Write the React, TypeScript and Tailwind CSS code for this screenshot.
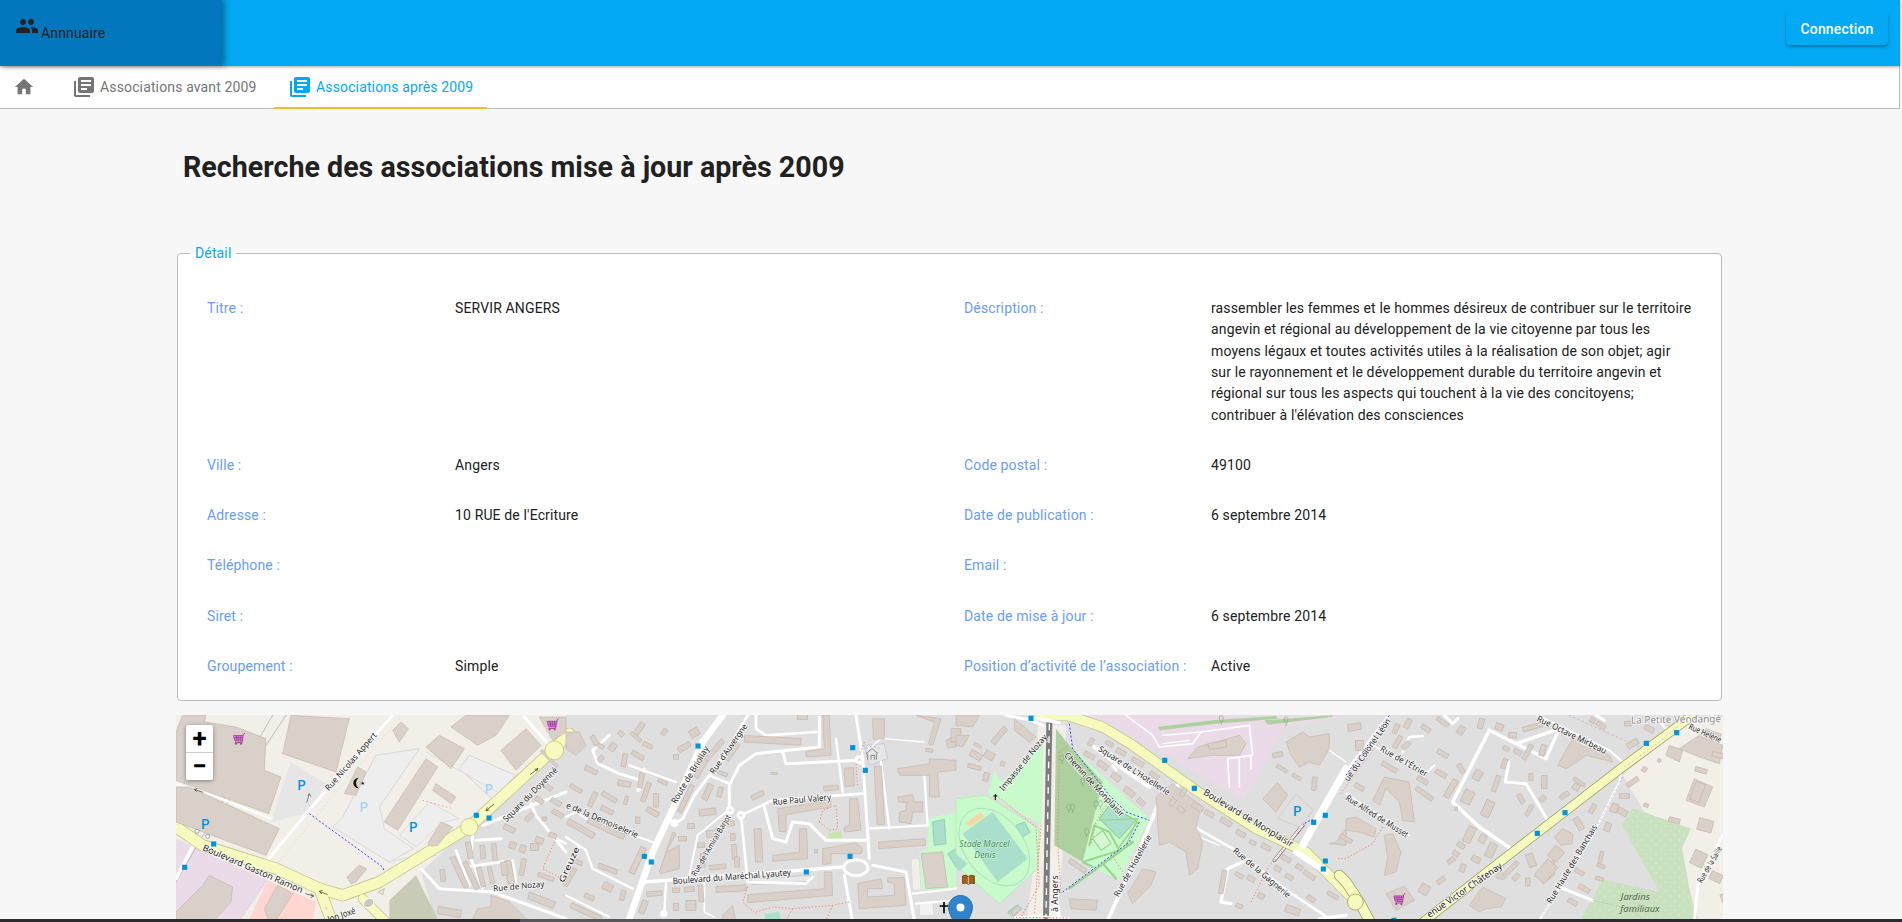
import React from "react";
import { MdPeople, MdHome, MdLibraryBooks } from "react-icons/md";

type Rect = [number, number, number, number, number?];
type Road = [string, number, string?, string?];
type Label = [string, number, number, number, number, number?, string?];
type Crop = {
  ox: number;
  areas: [string, string, string?][];
  polys: string[];
  rects: Rect[];
  roads: Road[];
  stops: [number, number][];
  labels: Label[];
};

const WHITE = "#ffffff";
const PRIMARY = "#f7fabf";
const PINK = "#fa8072";
const BLUE = "#3b3bff";
const LAWN = "#9bd48e";
const T = undefined;

const crops: Crop[] = [
  {
    ox: 0,
    areas: [
      ["#f2efe9", "0,0 1170,0 1170,630 0,630"],
      ["#e0dfdf", "735,480 1170,75 1170,630 780,630"],
      ["#ebdbe8", "0,380 275,505 190,630 0,630"],
      ["#ffd6d1", "275,505 420,570 410,630 215,630"],
      ["#c8cbb5", "640,565 720,490 790,630 640,630"],
      ["#e6e6e6", "345,150 450,215 400,300 290,330 300,280"],
      ["#eeeeee", "500,315 600,130 730,110 610,285 625,350 712,410 640,450 470,345", "#d8d8d8"],
      ["#eeeeee", "850,170 880,130 1020,190 950,262", "#d8d8d8"],
      ["#eeeeee", "670,370 760,270 850,320 800,330 720,405", "#dddddd"],
    ],
    polys: [
      "20,10 90,10 85,30 180,45 270,80 265,175 315,195 278,305 0,205 0,60",
      "345,10 520,20 480,180 320,125",
      "0,225 40,225 310,350 270,430 0,330",
      "505,245 545,165 570,180 540,250",
      "625,330 750,140 785,165 665,355",
      "750,105 790,70 865,110 825,170",
      "975,115 1050,50 1095,100 1020,175",
      "825,45 870,10 1000,10 960,70 905,100",
      "1090,15 1170,15 1170,60 1130,85",
      "650,55 675,30 697,50 670,90",
      "780,215 840,255 825,275 770,235",
      "755,395 795,330 830,345 785,400 765,402",
      "512,495 550,460 572,470 540,510 525,515",
      "0,600 80,520 100,490 170,525 165,570 110,630 0,630",
      "265,590 305,520 350,545 300,625 280,630",
      "885,630 905,590 945,585 945,550 1000,570 1060,630",
      "1060,540 1140,570 1130,590 1055,560",
    ],
    rects: [
      [820, 600, 22, 70, -80], [1000, 480, 20, 70, -10], [1120, 140, 70, 8, 45], [850, 480, 16, 100, -25], [885, 490, 14, 90, -25],
      [915, 495, 14, 60, -15], [945, 490, 12, 50, -12], [985, 470, 18, 40, -8], [880, 415, 16, 50, -10], [920, 420, 14, 40, -5],
      [955, 420, 14, 50, -5], [1040, 465, 14, 50, 10], [1090, 385, 24, 18, 20], [1130, 370, 24, 14, 20], [1075, 405, 24, 20, 0],
      [1040, 410, 18, 22, 20], [1010, 400, 20, 20, 20], [1000, 350, 36, 16, 25], [1060, 315, 30, 14, -45], [1090, 265, 28, 14, 35],
      [1145, 305, 36, 14, 30], [1115, 225, 30, 14, 35], [1140, 270, 34, 14, 30], [1105, 320, 14, 10, 0], [800, 490, 14, 36, -5], [1110, 495, 50, 12, 20],
    ],
    roads: [
      ["0,510 290,10", 1.5, "#8f8f8f"], ["90,370 330,10", 1.5, "#8f8f8f"],
      ["0,215 110,250 285,320", 6], ["270,450 420,270 650,10", 9], ["0,500 60,385", 11],
      ["300,460 460,265 670,20", 2, "#c6c6c0", "3 8"],
      ["190,630 280,490", 3, "#d0cdc6", "3 8"],
      ["890,370 885,440 920,530", 8], ["870,465 1010,445 1020,510", 8], ["900,385 975,380", 9], ["840,415 880,520", 8],
      ["735,470 790,530 950,540 1170,620", 9], ["920,340 1170,240", 9], ["1065,275 1080,310 1170,420", 9],
      ["1120,370 1170,395", 7], ["1045,15 1120,100", 9], ["1010,530 1000,450", 5],
      ["750,120 1000,260", 3, "#dddddd"], ["640,450 770,420", 3, "#dddddd"], ["640,470 780,430", 3, "#dddddd"],
      ["400,305 620,465 630,490", 3, BLUE, "6 6"], ["590,520 700,460", 3, BLUE, "6 6"],
      ["740,265 830,290", 2.5, PINK, "4 8"], ["1140,380 1100,470 1160,500", 3, PINK, "4 6"],
      ["430,530 470,635", 36, "#b9ba7b"], ["560,560 640,640", 30, "#b9ba7b"],
      ["0,345 80,400 300,470 430,530 500,550 610,510 880,345 1130,115 1180,65", 36, "#b9ba7b"],
      ["430,530 470,635", 32, PRIMARY], ["560,560 640,640", 26, PRIMARY],
      ["0,345 80,400 300,470 430,530 500,550 610,510 880,345 1130,115 1180,65", 32, PRIMARY],
    ],
    stops: [[113, 396], [26, 466], [901, 310], [939, 318]],
    labels: [
      ["Rue Nicolas Appert", 452, 232, 597, 65, 25],
      ["Boulevard Gaston Ramon", 82, 405, 380, 535, 27],
      ["Square du Doyenné", 985, 325, 1140, 170, 26],
      ["Rue de Nozay", 952, 530, 1105, 515, 25],
      ["Jon Joxé", 455, 622, 538, 595, 27],
    ],
  },
  {
    ox: 390,
    areas: [
      ["#e0dfdf", "0,0 1170,0 1170,630 0,630"],
      ["#c8facc", "1085,320 1170,300 1170,530 1065,535 1060,420 1085,410"],
      ["#e6e6e6", "895,100 955,95 965,140 910,160", "#c8c8d8"],
      ["#aae0cb", "1100,330 1135,322 1140,395 1105,400", "#8fd0b5"],
      ["#aae0cb", "1145,425 1170,410 1170,465", "#8fd0b5"],
      ["#c9e6a8", "785,365 825,358 828,378 790,382"],
      ["#aae0cb", "595,605 640,600 645,630 600,630"],
      ["#e8e8e8", "555,500 735,490 735,508 560,518", "#cccccc"],
      ["#f2f2f2", "1060,575 1100,570 1105,610 1060,612", "#d8d8d8"],
      ["#f2efe9", "1035,440 1060,440 1065,535 1040,535", "#dddddd"],
    ],
    polys: [
      "770,10 790,10 795,130 720,135 720,118 775,110",
      "1050,10 1125,20 1100,100 1088,95 1105,30",
      "995,170 1090,155 1090,140 1170,145 1170,175 1115,180 1120,255 1090,255 1090,190 1000,190",
      "995,255 1040,248 1045,270 1070,270 1070,300 1040,300 1035,335 1000,330 1000,300 1020,295 1020,270 998,270",
      "850,260 875,260 885,355 835,360 835,345 850,340",
      "635,290 795,265 795,285 660,308 660,360 640,358",
      "700,350 722,350 725,440 620,448 620,430 700,420",
      "770,410 870,392 890,410 885,425 795,425 795,455 770,458",
      "545,548 775,530 775,480 797,480 800,550 545,572",
      "875,515 945,500 950,530 905,530 905,555 985,550 985,515 965,510 965,497 1015,497 1020,580 880,590",
      "1065,425 1130,420 1145,525 1080,530",
      "920,20 955,20 955,80 922,82",
      "0,60 40,60 60,100 30,130 0,110",
      "280,480 320,360 330,365 300,420 340,400 340,470 285,485",
      "470,610 500,580 510,630 470,630",
      "1140,85 1170,70 1170,105 1145,108",
    ],
    rects: [
      [620, 85, 170, 20, 3], [940, 250, 22, 175, -3], [850, 195, 28, 55, -3], [577, 400, 22, 100, -3], [1008, 395, 140, 20, -4], [495, 530, 90, 18, -3],
      [710, 15, 30, 14, 0], [625, 185, 20, 6, 0], [575, 250, 40, 14, -25], [795, 228, 44, 14, -5], [1090, 115, 20, 10, 10],
      [215, 445, 18, 85, 25], [120, 350, 120, 16, 25], [125, 470, 60, 14, 20], [45, 350, 90, 18, 30], [75, 175, 40, 14, 25],
      [105, 140, 20, 14, -50], [140, 105, 20, 24, 35], [175, 145, 14, 40, 10], [100, 100, 30, 12, 30], [220, 50, 16, 40, 35],
      [165, 65, 18, 14, 40], [85, 85, 30, 14, 60], [210, 75, 40, 10, 40], [245, 100, 30, 12, 25], [215, 130, 40, 14, 30],
      [175, 215, 40, 16, 10], [225, 205, 14, 45, 10], [240, 240, 14, 60, 20], [290, 210, 30, 10, 25], [270, 265, 14, 40, 0],
      [260, 300, 40, 16, 30], [130, 255, 50, 14, 30], [180, 265, 10, 26, 15], [80, 262, 14, 46, 25], [30, 230, 40, 12, 30],
      [123, 295, 40, 14, 25], [215, 325, 14, 20, 0], [295, 60, 14, 20, 30], [355, 105, 40, 16, -30], [385, 62, 28, 24, -30],
      [330, 135, 14, 14, 0], [445, 115, 80, 14, -50], [405, 170, 60, 14, -60], [500, 120, 60, 12, -55], [360, 260, 90, 14, -65],
      [470, 185, 30, 10, 20], [425, 240, 18, 50, 25], [462, 240, 14, 30, 15], [425, 300, 50, 20, -5], [490, 335, 30, 14, -10],
      [375, 342, 20, 16, 0], [440, 365, 36, 20, -5], [500, 375, 14, 20, 0], [350, 380, 24, 14, 0], [405, 400, 20, 14, 0],
      [505, 420, 14, 45, -5], [410, 445, 14, 40, 0], [455, 465, 50, 14, -5], [513, 450, 14, 30, 0], [330, 535, 20, 14, 0],
      [370, 532, 30, 14, -5], [405, 545, 14, 50, -5], [265, 545, 46, 14, -5], [330, 585, 14, 22, 0], [375, 580, 30, 30, 0],
      [232, 585, 18, 40, 20], [125, 525, 30, 22, 25], [170, 550, 14, 30, 15], [70, 555, 30, 14, 25], [35, 450, 30, 12, 25],
      [60, 600, 100, 16, 25], [12, 495, 14, 60, 30], [750, 418, 10, 10, 0], [1170, 70, 30, 40, 0],
    ],
    roads: [
      ["470,10 410,90 330,270 260,420 190,620", 20], ["545,10 500,90 430,190 385,250 350,320 325,335", 9],
      ["130,70 80,115 95,155 160,185 225,205 215,235", 9], ["190,160 330,210", 7], ["235,170 220,235", 7],
      ["430,190 490,215", 7], ["760,105 570,125 520,160 490,220 490,290", 9], ["525,310 620,265 890,245", 8],
      ["525,310 545,510 720,515 740,495", 8], ["235,510 830,465", 10], ["870,10 890,140 910,440", 9],
      ["650,120 660,155 880,145", 9], ["760,15 760,105", 9], ["570,10 570,50 600,70 750,60", 8],
      ["810,80 830,240", 7], ["595,285 620,380 660,390 680,330 730,335 780,385 900,385", 9],
      ["945,150 970,350", 7], ["1075,190 1085,340 905,350", 7], ["955,80 1075,90", 4], ["950,75 910,110", 4],
      ["835,490 860,630", 9], ["920,460 1020,480 1045,625", 9], ["1040,545 1170,530", 7],
      ["300,510 295,600", 7], ["415,510 415,600 445,615", 5], ["0,375 60,415 80,470 200,530", 7],
      ["0,315 30,300 60,320 260,390", 6], ["0,550 130,615", 6], ["370,490 395,370 480,300", 6], ["1050,575 1170,565", 7],
      ["495,290 440,370", 4, "#e8e8e8"],
      ["545,525 530,570 575,610", 3, PINK, "4 6"], ["570,600 620,585 680,590 800,580 850,570", 3, PINK, "4 6"],
      ["680,590 660,625", 3, PINK, "4 6"], ["800,580 780,625", 3, PINK, "4 6"],
      ["760,330 770,295 810,280 815,350 790,355 760,330", 3, PINK, "4 6"], ["895,90 870,160 875,220", 3, PINK, "4 6"],
    ],
    stops: [[396, 102], [235, 433], [256, 450], [860, 107], [898, 175], [852, 433], [721, 480]],
    labels: [
      ["Route de Briollay", 322, 272, 422, 105, 26],
      ["Rue d'Auvergne", 437, 183, 538, 38, 25],
      ["e de la Demoiselerie", 2, 278, 216, 370, 26],
      ["Rue Paul Valery", 620, 270, 795, 255, 27],
      ["Rue de l'Amiral Barjot", 382, 490, 488, 310, 24],
      ["Boulevard du Maréchal Lyautey", 320, 507, 675, 481, 27],
      ["Greuze", -15, 510, 33, 405, 25],
    ],
  },
  {
    ox: 780,
    areas: [
      ["#e0dfdf", "0,0 1170,0 1170,630 0,630"],
      ["#ebdbe8", "390,10 1170,10 1170,14 985,45 862,265 600,110"],
      ["#f2efe9", "245,40 330,40 320,430 300,630 210,630 250,350"],
      ["#c8facc", "95,245 115,175 135,210 262,90 258,340"],
      ["#c8facc", "0,260 90,250 250,350 245,470 130,575 0,460", "#b8ecbc"],
      ["#c8facc", "340,100 580,320 490,505 375,450"],
      ["#add19e", "300,50 340,100 440,210 420,290 380,450 295,400"],
      ["#aae0cb", "20,365 110,300 215,440 125,510"],
      ["#f5d7a3", "28,335 75,300 85,315 40,345"],
      ["#aae0cb", "180,340 205,330 222,360 200,375", "#8fd0b5"],
      ["#aae0cb", "0,425 35,455 10,478 0,470"],
      ["#aae0cb", "155,600 185,578 198,590 170,615", "#8fd0b5"],
      ["#aae0cb", "430,320 460,280 540,325 490,380", "#88c97b"],
      ["#d8f5d2", "410,380 440,355 465,395 435,415", "#88c97b"],
      ["#add19e", "605,45 770,25 960,12 965,20 780,35 612,55"],
      ["#add19e", "925,25 1130,10 1130,14 935,38"],
    ],
    polys: [
      "600,255 650,215 700,255 735,280 720,345 740,390 725,470 700,490 690,420 640,390 610,400",
      "515,545 560,470 600,480 585,520 530,575",
      "340,560 425,565 420,595 345,590",
      "725,105 850,70 870,95 850,130 770,130 695,140",
      "755,95 810,85 812,105 760,112",
      "990,90 1040,60 1060,75 1120,65 1120,110 1090,160 1060,150 1030,165 1005,130",
      "920,260 965,212 995,250 960,300",
      "1170,350 1140,390 1120,395 1170,400",
      "0,70 40,70 20,105 0,100",
      "0,10 70,10 50,45 0,40",
      "175,20 240,75 220,90 175,55",
    ],
    rects: [
      [130, 70, 16, 60, 40], [65, 100, 24, 8, 30], [60, 130, 36, 20, 30], [100, 130, 30, 22, 30], [55, 165, 40, 12, 15], [90, 195, 16, 26, 15],
      [140, 155, 12, 14, 20], [365, 462, 60, 14, 35], [180, 595, 30, 14, -40], [405, 90, 12, 24, 30], [460, 95, 24, 12, 30], [495, 120, 30, 14, 30],
      [545, 150, 40, 14, 30], [595, 190, 30, 14, 35], [400, 130, 34, 14, 30], [440, 160, 34, 18, 35], [480, 195, 30, 18, 35], [520, 240, 36, 18, 40],
      [555, 270, 26, 16, 40], [650, 270, 14, 24, 35], [682, 240, 14, 26, 30], [675, 292, 24, 12, 35], [725, 285, 36, 16, 30], [760, 305, 30, 14, 30],
      [810, 330, 36, 16, 30], [855, 365, 30, 14, 30], [890, 392, 20, 12, 30], [930, 405, 30, 14, 30], [990, 440, 30, 14, 30], [1030, 465, 20, 14, 30],
      [1060, 490, 40, 14, 35], [965, 470, 20, 16, 30], [1000, 495, 24, 14, 30], [850, 490, 26, 12, 30], [885, 500, 24, 14, 30], [915, 552, 20, 16, 30],
      [850, 582, 20, 12, 20], [800, 510, 14, 70, 10], [1075, 215, 14, 40, 5], [965, 128, 30, 14, -10], [978, 170, 36, 10, 30], [1022, 195, 30, 10, 30],
      [1130, 550, 36, 12, 30], [1065, 560, 26, 14, 35], [1010, 595, 44, 22, 20], [1170, 380, 40, 12, 30],
    ],
    roads: [
      ["280,35 270,612", 18, "#7d7d7d"], ["280,35 270,612", 4, "#ffffff", "20 18"], ["255,340 235,610", 3, PINK, "4 6"],
      ["150,10 225,25 262,40", 9], ["415,105 500,170 580,225", 12], ["470,160 480,175", 8],
      ["680,205 605,280 530,460 455,625", 11], ["610,285 830,410 1000,540 1120,620", 8],
      ["590,300 630,300", 5, "#eeeeee"], ["640,340 720,370 790,400", 4], ["860,450 815,470 795,570 825,575", 10],
      ["1120,115 1170,150", 4], ["1170,610 1090,620", 10],
      ["510,10 590,70 610,105 710,95 735,60 880,40 890,130 815,140 820,225", 5], ["885,135 885,170", 5], ["850,140 850,225", 5],
      ["620,70 735,60", 4], ["620,95 700,85", 4], ["300,560 310,620", 12],
      ["340,530 530,390", 7, LAWN], ["445,460 480,500", 7, LAWN], ["400,400 415,340 460,360 490,415 380,450 410,465", 6, LAWN], ["430,325 545,320 510,400", 4, LAWN],
      ["545,330 490,405", 4, LAWN],
      ["340,35 350,110 460,250 510,300 580,325", 3, BLUE, "6 6"], ["550,330 520,390 320,540", 3, BLUE, "6 6"],
      ["1165,170 1080,320 1050,330 1040,350", 3, BLUE, "6 6"],
      ["120,250 240,345 250,520 195,615", 3, PINK, "4 6"], ["310,120 305,390 315,550", 3, PINK, "4 6"], ["310,120 340,95", 3, PINK, "4 6"],
      ["450,280 420,330 405,400", 3, PINK, "4 6"], ["465,425 500,480", 3, PINK, "4 6"], ["885,570 940,460 1040,350", 3, PINK, "4 6"],
      ["1040,340 955,445", 10, "#555555"], ["1040,340 955,445", 7, "#ffffff"], ["1040,340 955,445", 3, PINK, "4 6"],
      ["170,616 250,612 340,618", 5, "#ffffff"], ["170,616 340,618", 3, PINK, "4 6"],
      ["250,8 340,12 440,45 530,100 720,235 900,350 1050,420 1180,550", 32, "#b9ba7b"],
      ["250,8 340,12 440,45 530,100 720,235 900,350 1050,420 1180,550", 28, PRIMARY],
      ["230,18 310,32", 10, "#ffffff"],
      ["1170,170 1040,400", 22], ["1020,420 1110,480", 18],
    ],
    stops: [[225, 19], [626, 145], [715, 229], [1073, 331], [1108, 310], [1108, 447], [1102, 471]],
    labels: [
      ["Impasse de Nozay", 135, 233, 268, 70, 25],
      ["Chemin de Monplaisir", 330, 125, 500, 310, 26],
      ["Square de L'Hotellerie", 430, 108, 640, 243, 25],
      ["Boulevard de Monplaisir", 745, 238, 1010, 398, 28],
      ["Rue de l'Hotellerie", 480, 552, 580, 370, 25],
      ["Rue de la Gagnerie", 835, 412, 1000, 552, 26],
      ["à Angers", 298, 600, 298, 490, 26],
    ],
  },
  {
    ox: 1170,
    areas: [
      ["#e0dfdf", "0,0 1170,0 1170,630 0,630"],
      ["#f2efe9", "830,190 1020,30 1170,10 1170,630 1060,630 1030,530"],
      ["#c9e1bf", "828,340 860,288 1035,350 1008,408 1048,630 700,630 770,503 940,540"],
      ["url(#allot)", "828,340 860,288 1035,350 1008,408 1048,630 700,630 770,503 940,540"],
    ],
    polys: [
      "635,160 680,80 790,130 800,150 760,140 720,130 700,145 660,170",
      "120,545 175,522 205,565 150,595",
      "370,580 410,525 480,560 465,585 420,590 400,600",
      "1020,265 1045,200 1100,225 1075,285",
      "960,130 970,100 1010,115 1000,150",
      "1000,110 1060,70 1130,100 1120,155 1060,135",
      "80,265 115,195 190,210 205,330 170,325 160,270 120,230 100,280",
      "580,480 625,440 625,490 590,515",
      "0,320 30,315 90,350 85,375 40,360 0,355",
      "115,370 140,365 165,420 150,480 115,490 125,440",
      "650,350 680,365 680,395 645,400 625,375",
    ],
    rects: [
      [425, 290, 26, 50, 25], [365, 255, 30, 40, 25], [315, 230, 18, 60, 30], [235, 245, 60, 14, 35], [290, 125, 36, 14, 30],
      [230, 205, 36, 14, 30], [285, 185, 14, 36, -60], [345, 170, 14, 30, -30], [395, 190, 24, 30, 30], [155, 90, 14, 40, 30],
      [130, 165, 50, 14, 30], [185, 35, 16, 30, 30], [240, 50, 30, 14, 35], [290, 30, 40, 12, 35], [345, 55, 20, 26, 35],
      [405, 35, 16, 30, 15], [460, 45, 24, 20, 20], [560, 45, 60, 14, -15], [500, 70, 24, 16, 0], [590, 115, 16, 34, 15],
      [545, 120, 14, 50, 30], [515, 120, 24, 14, 30], [480, 110, 20, 12, 30], [475, 155, 14, 30, 20], [450, 215, 14, 50, 20],
      [555, 195, 12, 20, 0], [595, 210, 16, 40, 0], [590, 260, 20, 14, -45], [525, 260, 14, 30, -30], [550, 295, 12, 36, 30],
      [655, 250, 30, 14, -35], [700, 210, 40, 10, 35], [690, 225, 20, 20, 30], [740, 290, 14, 30, 30], [785, 345, 18, 26, 20],
      [698, 335, 18, 40, -30], [805, 288, 20, 26, 20], [830, 300, 30, 18, 30], [370, 368, 24, 50, 25], [345, 400, 24, 14, 30],
      [410, 380, 20, 26, 30], [435, 415, 24, 44, 25], [390, 442, 26, 18, 25], [330, 425, 20, 14, 35], [350, 468, 16, 24, 20],
      [315, 445, 24, 14, -35], [285, 505, 26, 14, -35], [235, 532, 28, 30, 30], [600, 478, 40, 64, 40], [630, 425, 34, 40, 40],
      [555, 445, 22, 40, -20], [490, 475, 14, 70, 45], [510, 495, 14, 24, 45], [460, 490, 14, 20, 45], [545, 510, 14, 24, 0],
      [765, 435, 10, 36, 15], [765, 462, 24, 10, 20], [700, 480, 30, 12, 30], [715, 530, 36, 14, 30], [680, 570, 30, 14, 30],
      [760, 500, 24, 10, 15], [860, 210, 40, 14, -35], [895, 172, 14, 14, 30], [940, 145, 10, 10, 30], [835, 252, 30, 14, 0],
      [900, 280, 14, 10, 20], [1065, 175, 36, 14, 15], [1055, 240, 30, 56, 20], [1078, 340, 44, 36, 15], [985, 325, 34, 14, 15],
      [1058, 440, 40, 44, 25], [1110, 495, 36, 26, 25], [1100, 65, 50, 14, 20], [1120, 130, 44, 14, 15], [860, 95, 36, 18, -30],
      [910, 50, 30, 16, 30], [40, 100, 24, 30, 0], [25, 45, 40, 20, -10], [40, 225, 30, 14, 30], [180, 100, 30, 14, -40],
      [150, 50, 14, 30, 25], [845, 35, 20, 14, 0], [765, 40, 30, 14, 35], [740, 25, 16, 16, 30], [330, 290, 10, 10, 0],
      [1140, 555, 30, 24, -20],
    ],
    roads: [
      ["130,10 0,180", 10], ["0,180 -20,220", 10],
      ["430,55 320,270 400,345 495,410", 11], ["430,55 600,140 640,50 510,95", 10], ["488,150 478,210 540,215 605,325", 9],
      ["170,120 190,75 230,72", 8], ["80,100 240,185 265,160", 6], ["0,245 190,370", 6],
      ["575,10 790,115 830,150 820,210 740,370 580,625", 6], ["640,525 740,565", 9], ["1130,370 1055,520 1045,630", 9],
      ["295,10 320,35 335,20", 9], ["750,10 775,25", 9], ["930,20 960,50", 8], ["1060,0 1130,20", 3],
      ["830,195 760,330 590,610", 2, "#b892c8", "5 4 1 4"], ["670,10 890,110 950,60", 2, "#b892c8", "5 4 1 4"],
      ["740,565 850,590 900,630", 3, "#c5b3a0", "3 6"],
      ["130,10 0,190", 3, BLUE, "6 6"], ["100,90 -20,250", 2.5, PINK, "4 6"],
      ["110,345 80,395 0,440", 3, PINK, "4 6"], ["0,440 -30,440", 3, PINK, "4 6"],
      ["225,635 500,420 830,165 1040,10", 29, "#8f9049"],
      ["225,635 500,420 830,165 1040,10", 25, PRIMARY],
      ["835,165 940,90 1010,30", 2, "#b892c8", "5 4 1 4"],
      ["-20,490 0,510 40,570 75,635", 33, "#8f9049"],
      ["-20,490 0,510 40,570 75,635", 29, PRIMARY],
    ],
    stops: [[574, 364], [657, 302], [901, 94], [992, 62], [144, 625]],
    labels: [
      ["ue du Colonel Léon", 0, 205, 128, 22, 25],
      ["Rue de l'Étrier", 105, 108, 243, 187, 25],
      ["Rue Alfred de Musset", 2, 255, 185, 370, 26],
      ["Rue Octave Mirbeau", 575, 18, 780, 118, 26],
      ["Rue Hélène", 1030, 42, 1125, 85, 26],
      ["enue Victor Châtenay", 245, 610, 465, 458, 28],
      ["Rue Haute des Banchais", 608, 572, 747, 340, 26],
      ["Rue de la Saille", 1060, 510, 1122, 405, 25],
      ["La Petite Vendangé", 855, 24, 1125, 20, 30, "#8a8a8a"],
    ],
  },
];

function Lbl({ l }: { l: Label }) {
  const [t, x1, y1, x2, y2, size = 26, fill = "#222222"] = l;
  const len = Math.hypot(x2 - x1, y2 - y1);
  const a = (Math.atan2(y2 - y1, x2 - x1) * 180) / Math.PI;
  return (
    <text
      x={x1}
      y={y1}
      dy=".35em"
      fontSize={size}
      fill={fill}
      fontFamily="'Noto Sans', sans-serif"
      stroke="#ffffff"
      strokeOpacity={0.85}
      strokeWidth={5}
      paintOrder="stroke"
      textLength={len}
      lengthAdjust="spacingAndGlyphs"
      transform={`rotate(${a} ${x1} ${y1})`}
    >
      {t}
    </text>
  );
}

function CropG({ ox, children }: { ox: number; children: React.ReactNode }) {
  return <g transform={`translate(${ox} -3) scale(${1 / 3})`}>{children}</g>;
}

function Cart({ x, y }: { x: number; y: number }) {
  return (
    <g transform={`translate(${x} ${y})`} fill="none" stroke="#ac39ac" strokeWidth={3}>
      <path d="M36 0 L31 4 L28 24 L6 24 L2 8 L30 8 M4 13 L29 13 M5 18 L28 18 M10 8 L12 24 M17 8 L17 24 M24 8 L23 24" />
      <path d="M28 24 L27 29 L6 29" />
      <circle cx={9} cy={32} r={2} fill="#ac39ac" />
      <circle cx={24} cy={32} r={2} fill="#ac39ac" />
    </g>
  );
}

function Tree({ x, y }: { x: number; y: number }) {
  return (
    <g transform={`translate(${x} ${y})`} fill="none" stroke="#8aa883" strokeWidth={2}>
      <ellipse cx={0} cy={0} rx={6} ry={9} />
      <path d="M0 9 V18" />
    </g>
  );
}

function MapDrawing() {
  const P = (x: number, y: number, c: string, s = 44) => (
    <text x={x} y={y} fontSize={s} fontWeight={500} fill={c} fontFamily="'Noto Sans', sans-serif">P</text>
  );
  return (
    <svg width={1547} height={204} viewBox="0 0 1547 204" className="block">
      <defs>
        <pattern id="allot" width="28" height="28" patternUnits="userSpaceOnUse">
          <circle cx="6" cy="6" r="1.6" fill="#eef6e8" />
          <circle cx="20" cy="20" r="1.6" fill="#eef6e8" />
        </pattern>
      </defs>
      {crops.map((c) => (
        <CropG key={c.ox} ox={c.ox}>
          {c.areas.map((a, i) => (
            <polygon key={i} points={a[1]} fill={a[0]} stroke={a[2]} strokeWidth={a[2] ? 3 : 0} />
          ))}
        </CropG>
      ))}
      {crops.map((c) => (
        <CropG key={c.ox} ox={c.ox}>
          {c.roads.map((r, i) => (
            <polyline
              key={i}
              points={r[0]}
              fill="none"
              stroke={r[2] ?? WHITE}
              strokeWidth={r[1]}
              strokeDasharray={r[3] ?? T}
              strokeLinecap={r[3] ? "butt" : "round"}
              strokeLinejoin="round"
            />
          ))}
        </CropG>
      ))}
      {crops.map((c) => (
        <CropG key={c.ox} ox={c.ox}>
          <g fill="#d9d0c9" stroke="#c4b6ab" strokeWidth={2}>
            {c.polys.map((p, i) => (
              <polygon key={i} points={p} />
            ))}
            {c.rects.map(([cx, cy, w, h, a = 0], i) => (
              <rect key={i} x={cx - w / 2} y={cy - h / 2} width={w} height={h} transform={`rotate(${a} ${cx} ${cy})`} />
            ))}
          </g>
        </CropG>
      ))}
      <CropG ox={0}>
        <circle cx={880} cy={345} r={26} fill={PRIMARY} stroke="#b9ba7b" strokeWidth={2} />
        <circle cx={1135} cy={115} r={28} fill={PRIMARY} stroke="#b9ba7b" strokeWidth={2} />
        <ellipse cx={578} cy={573} rx={17} ry={13} fill="#c8cbb5" stroke="#ffffff" strokeWidth={3} transform="rotate(-35 578 573)" />
        <polygon points="607,540 625,530 620,548" fill="#f2efe9" stroke="#a8a970" strokeWidth={2} />
        <polygon points="445,580 460,590 448,595" fill="#ffd6d1" />
        <circle cx={63} cy={358} r={6} fill="#ffffff" stroke="#777777" strokeWidth={2} />
        <circle cx={95} cy={373} r={6} fill="#ffffff" stroke="#777777" strokeWidth={2} />
        <Cart x={171} y={63} />
        <Cart x={1112} y={20} />
        {P(363, 235, "#0092da")}
        {P(74, 350, "#0092da")}
        {P(698, 360, "#0092da")}
        {P(550, 300, "#a5d4ef")}
        {P(925, 245, "#a5d4ef")}
        <path d="M548 197 A16 16 0 1 0 548 229 A20 20 0 0 1 548 197 Z" fill="#111111" />
        <text x={553} y={219} fontSize={16} fill="#111111" fontFamily="'DejaVu Sans', sans-serif">★</text>
        <path d="M400 245 L392 272 M400 245 L395 252 M400 245 L405 254" stroke="#555555" strokeWidth={2} fill="none" />
        <path d="M55 232 L82 241 M55 232 L64 230 M55 232 L62 239" stroke="#333333" strokeWidth={2} fill="none" />
        <path d="M388 545 L413 552 M413 552 L404 545 M413 552 L404 557" stroke="#333300" strokeWidth={2} fill="none" />
        <path d="M430 538 L455 548 M430 538 L438 546 M430 538 L440 535" stroke="#333300" strokeWidth={2} fill="none" />
        <path d="M1062 188 L1086 170 M1086 170 L1076 172 M1086 170 L1082 178" stroke="#333300" strokeWidth={2} fill="none" />
        <path d="M930 296 L954 276 M930 296 L940 294 M930 296 L934 286" stroke="#333300" strokeWidth={2} fill="none" />
      </CropG>
      <CropG ox={390}>
        <circle cx={492} cy={295} r={13} fill="#ffffff" /><circle cx={492} cy={295} r={4} fill="#e0dfdf" />
        <circle cx={525} cy={310} r={13} fill="#ffffff" /><circle cx={525} cy={310} r={4} fill="#e0dfdf" />
        <circle cx={880} cy={143} r={14} fill="#ffffff" /><circle cx={880} cy={143} r={5} fill="#e0dfdf" />
        <circle cx={325} cy={333} r={12} fill="#ffffff" />
        <circle cx={293} cy={605} r={11} fill="#ffffff" />
        <ellipse cx={870} cy={467} rx={36} ry={24} fill="#e0dfdf" stroke="#ffffff" strokeWidth={9} />
        <g stroke="#555555" strokeWidth={2} fill="none">
          <path d="M900 125 L918 110 L936 125 M905 125 V143 M931 125 V143 M915 143 V130 H925 V143" />
          <path d="M900 108 h5 M912 104 h5 M924 104 h5 M935 108 h5" strokeDasharray="2 2" />
        </g>
        <g stroke="#000000" strokeWidth={5}><path d="M1134 570 V604 M1121 582 H1147" /></g>
      </CropG>
      <CropG ox={780}>
        <ellipse cx={115} cy={405} rx={88} ry={130} fill="none" stroke="#a8e3c0" strokeWidth={3} transform="rotate(-38 115 405)" />
        <text x={10} y={405} fontSize={26} fontStyle="italic" fill="#3a8f4b" fontFamily="'Noto Sans', sans-serif" stroke="#ffffff" strokeOpacity={0.5} strokeWidth={3} paintOrder="stroke">Stade Marcel</text>
        <text x={55} y={438} fontSize={26} fontStyle="italic" fill="#3a8f4b" fontFamily="'Noto Sans', sans-serif" stroke="#ffffff" strokeOpacity={0.5} strokeWidth={3} paintOrder="stroke">Denis</text>
        <path d="M118 246 V264 M112 252 H124" stroke="#000000" strokeWidth={3} />
        <Tree x={338} y={285} /><Tree x={350} y={285} /><Tree x={420} y={275} /><Tree x={433} y={275} />
        <Tree x={318} y={138} /><Tree x={380} y={205} /><Tree x={392} y={358} /><Tree x={796} y={20} /><Tree x={990} y={24} />
        <g fill="none" stroke="#734a08" strokeWidth={3}>
          <path d="M20 492 Q30 486 37 494 Q45 486 55 492 V515 Q45 510 37 517 Q30 510 20 515 Z" fill="#a0601c" />
        </g>
        <path d="M37 494 V517" stroke="#ffffff" strokeWidth={2} />
        <text x={1010} y={312} fontSize={44} fontWeight={500} fill="#0092da" fontFamily="'Noto Sans', sans-serif">P</text>
        <polygon points="965,320 1020,245 1072,295 1030,345" fill="none" stroke="#d3cdc5" strokeWidth={3} />
      </CropG>
      <CropG ox={1170}>
        <circle cx={28} cy={570} r={24} fill={PRIMARY} stroke="#8f9049" strokeWidth={2} />
        <Cart x={142} y={544} />
        <text x={868} y={563} textAnchor="middle" fontSize={28} fontStyle="italic" fill="#4f6b4a" fontFamily="'Noto Sans', sans-serif">Jardins</text>
        <text x={882} y={600} textAnchor="middle" fontSize={28} fontStyle="italic" fill="#4f6b4a" fontFamily="'Noto Sans', sans-serif">familiaux</text>
      </CropG>
      {crops.map((c) => (
        <CropG key={c.ox} ox={c.ox}>
          {c.stops.map(([x, y], i) => (
            <rect key={i} x={x - 8} y={y - 8} width={16} height={16} fill="#0092da" stroke="#ffffff" strokeOpacity={0.5} strokeWidth={1} />
          ))}
          {c.labels.map((l, i) => (
            <Lbl key={i} l={l} />
          ))}
        </CropG>
      ))}
    </svg>
  );
}

function Field({ label, children }: { label: string; children?: React.ReactNode }) {
  return (
    <>
      <div className="py-[14.4px] text-[#6b9df0]">{label}</div>
      <div className="py-[14.4px] pr-[4px] text-[#212121]">{children}</div>
    </>
  );
}

export default function App() {
  return (
    <div
      className="flex h-[922px] w-full flex-col overflow-hidden bg-[#f7f7f7] text-[14px] leading-[21.4px] tracking-[0.14px]"
      style={{ fontFamily: "Roboto, sans-serif" }}
    >
      <div className="flex-1 overflow-hidden">
        <div className="mr-[2px]">
          <header className="relative z-10 flex h-[66px] items-start justify-between bg-[#03a9f4] pr-[12px] shadow-[0_1px_3px_rgba(0,0,0,0.35)]">
            <div className="flex h-[66px] w-[222px] bg-[#0277bd] pl-[15px] text-[#212121] shadow-[3px_0_6px_rgba(0,0,0,0.35)]">
              <MdPeople size={24} className="mt-[14px]" />
              <span className="mt-[23px] ml-[2px]">Annnuaire</span>
            </div>
            <button className="mt-[12px] h-[33px] w-[102px] rounded-[4px] bg-[#03a9f4] pt-[2px] font-medium text-white shadow-[0_2px_3px_rgba(0,0,0,0.3)]">
              Connection
            </button>
          </header>
          <nav className="flex h-[43px] items-stretch border-r border-b border-[#bbbbbb] bg-white text-[#757575]">
            <div className="flex w-[58px] items-start pt-[10px] pl-[13px]">
              <MdHome size={22} />
            </div>
            <div className="flex w-[216px] gap-[4px] pt-[9px] pl-[14px]">
              <MdLibraryBooks size={24} />
              <span className="pt-[2px]">Associations avant 2009</span>
            </div>
            <div className="mb-[-1px] flex w-[213px] gap-[4px] border-b-2 border-[#f0bc2e] pt-[9px] pl-[14px] text-[#03a9f4]">
              <MdLibraryBooks size={24} />
              <span className="pt-[2px]">Associations après 2009</span>
            </div>
          </nav>
        </div>
        <main className="mr-[179px] ml-[176px]">
          <h1 className="mt-[39px] ml-[7px] text-[28.65px] leading-[38px] font-bold tracking-normal text-[#212121]">
            Recherche des associations mise à jour après 2009
          </h1>
          <fieldset className="mt-[57px] mr-[1px] ml-[1px] h-[458px] rounded-[4px] border border-[#bbbbbb] bg-white pt-[19px] pl-[29px]">
            <legend className="ml-[-17px] px-[5px] text-[#03a9f4]">Détail</legend>
            <div className="grid grid-cols-[248px_509px_247px_486px]">
              <Field label="Titre :">SERVIR ANGERS</Field>
              <Field label="Déscription :">
                rassembler les femmes et le hommes désireux de contribuer sur le territoire angevin et régional au développement de la vie citoyenne par tous les moyens légaux et toutes activités utiles à la réalisation de son objet; agir sur le rayonnement et le développement durable du territoire angevin et régional sur tous les aspects qui touchent à la vie des concitoyens; contribuer à l'élévation des consciences
              </Field>
              <Field label="Ville :">Angers</Field>
              <Field label="Code postal :">49100</Field>
              <Field label="Adresse :">10 RUE de l'Ecriture</Field>
              <Field label="Date de publication :">6 septembre 2014</Field>
              <Field label="Téléphone :" />
              <Field label="Email :" />
              <Field label="Siret :" />
              <Field label="Date de mise à jour :">6 septembre 2014</Field>
              <Field label="Groupement :">Simple</Field>
              <Field label="Position d’activité de l’association :">Active</Field>
            </div>
          </fieldset>
          <div className="relative mt-[14px] h-[204px] w-[1547px] overflow-hidden">
            <MapDrawing />
            <div className="absolute top-[10px] left-[10px] flex w-[27px] flex-col overflow-hidden rounded-[2px] bg-white text-[26px] leading-[26px] font-bold tracking-normal text-black shadow-[0_1px_4px_rgba(0,0,0,0.4)]">
              <div className="h-[28px] border-b border-[#cccccc] text-center">+</div>
              <div className="h-[27px] text-center">−</div>
            </div>
            <svg width={25} height={41} viewBox="0 0 25 41" className="absolute top-[180px] left-[772px]">
              <path d="M12.5 0.5C5.9 0.5 0.5 5.9 0.5 12.5C0.5 20 9 30 12.5 40.5C16 30 24.5 20 24.5 12.5C24.5 5.9 19.1 0.5 12.5 0.5Z" fill="#2e85cb" stroke="#2a6fa8" />
              <circle cx={12.5} cy={12.5} r={4} fill="#ffffff" />
            </svg>
          </div>
        </main>
      </div>
      <div className="flex h-[3px] shrink-0 bg-[#2b2b2e]">
        <div className="ml-[520px] w-[160px] bg-[#57575a]" />
      </div>
    </div>
  );
}
